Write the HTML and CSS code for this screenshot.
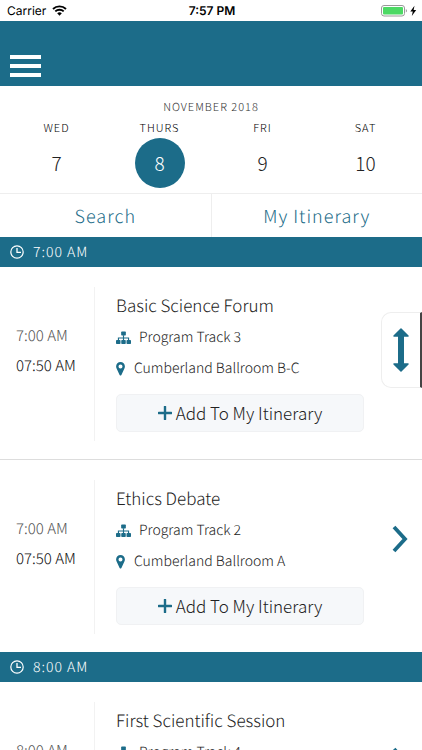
FILE: index.html
```html
<!DOCTYPE html>
<html lang="en">
<head>
  <meta charset="UTF-8">
  <meta name="viewport" content="width=device-width, initial-scale=1">
  <title>Schedule</title>
  <link rel="stylesheet" href="styles.css">
</head>
<body>

  <!-- shared icons -->
  <svg class="sprite" aria-hidden="true">
    <symbol id="clock" viewBox="0 0 14 14">
      <circle cx="7" cy="7" r="6.2" fill="none" stroke="currentColor" stroke-width="1.2"/>
      <path d="M7 3v4.4h4" fill="none" stroke="currentColor" stroke-width="1.3"/>
    </symbol>
    <symbol id="track" viewBox="0 0 16 14">
      <rect x="5.5" y="0" width="5" height="4.2" rx=".8"/>
      <path d="M8 4v6M2.6 10V7h10.8v3" fill="none" stroke="currentColor" stroke-width="1.2"/>
      <rect x="0" y="9.2" width="4.8" height="4.3" rx=".8"/>
      <rect x="5.6" y="9.2" width="4.8" height="4.3" rx=".8"/>
      <rect x="11.2" y="9.2" width="4.8" height="4.3" rx=".8"/>
    </symbol>
    <symbol id="pin" viewBox="0 0 9 14">
      <path fill-rule="evenodd" d="M4.500 0A4.400 4.400 0 0 0 .1 4.500c0 .8.2 1.500.5 2.100L3.600 13q.9 1.200 1.800 0l3-6.400c.3-.6.500-1.300.5-2.100A4.400 4.400 0 0 0 4.500 0zm0 2.500a2 2 0 1 1 0 4 2 2 0 0 1 0-4z"/>
    </symbol>
    <symbol id="plus" viewBox="0 0 14 14">
      <path d="M7 .8v12.400M.8 7h12.400" fill="none" stroke="currentColor" stroke-width="2.400" stroke-linecap="round"/>
    </symbol>
    <symbol id="chevron" viewBox="0 0 16 28">
      <path d="M2 2l11 12L2 26" fill="none" stroke="currentColor" stroke-width="3.800"/>
    </symbol>
  </svg>

  <div class="status">
    <div class="carrier">
      <span>Carrier</span>
      <svg width="15" height="11" viewBox="0 0 15 11">
        <path d="M1 4a9.300 9.300 0 0 1 13 0M3.300 6.400a6 6 0 0 1 8.400 0" fill="none" stroke="#000" stroke-width="1.900"/>
        <path d="M5.200 8.300a3.300 3.300 0 0 1 4.600 0L7.500 10.700z"/>
      </svg>
    </div>
    <strong>7:57 PM</strong>
    <div class="battery">
      <svg width="36" height="12" viewBox="0 0 36 12">
        <rect x=".5" y=".5" width="23" height="10.500" rx="2.500" fill="#fff" stroke="#999"/>
        <rect x="2" y="2" width="20" height="7.500" rx="1" fill="#4cd964"/>
        <path d="M24.800 4v3.500q1.200-.5 1.200-1.750T24.800 4z" fill="#999"/>
        <path d="M33.500.8L29.300 6.600h2.500l-1 4.400 4.400-6h-2.600z"/>
      </svg>
    </div>
  </div>

  <header class="header">
    <button class="menu" aria-label="Menu"><span></span><span></span><span></span></button>
  </header>

  <section class="calendar">
    <h1>NOVEMBER 2018</h1>
    <div class="days">
      <button class="day"><span>WED</span><b>7</b></button>
      <button class="day active"><span>THURS</span><b>8</b></button>
      <button class="day"><span>FRI</span><b>9</b></button>
      <button class="day"><span>SAT</span><b>10</b></button>
    </div>
  </section>

  <nav class="tabs">
    <a href="#search">Search</a>
    <a href="#itinerary">My Itinerary</a>
  </nav>

  <main class="schedule">
    <h2 class="slot"><svg><use href="#clock"/></svg>7:00 AM</h2>

    <article class="session">
      <div class="times"><span>7:00 AM</span><span class="end">07:50 AM</span></div>
      <div class="info">
        <h3>Basic Science Forum</h3>
        <p><svg class="track"><use href="#track"/></svg>Program Track 3</p>
        <p><svg class="pin"><use href="#pin"/></svg>Cumberland Ballroom B-C</p>
        <button class="add"><svg><use href="#plus"/></svg>Add To My Itinerary</button>
      </div>
      <a class="more" href="#basic-science" aria-label="Details"><svg><use href="#chevron"/></svg></a>
    </article>

    <article class="session">
      <div class="times"><span>7:00 AM</span><span class="end">07:50 AM</span></div>
      <div class="info">
        <h3>Ethics Debate</h3>
        <p><svg class="track"><use href="#track"/></svg>Program Track 2</p>
        <p><svg class="pin"><use href="#pin"/></svg>Cumberland Ballroom A</p>
        <button class="add"><svg><use href="#plus"/></svg>Add To My Itinerary</button>
      </div>
      <a class="more" href="#ethics" aria-label="Details"><svg><use href="#chevron"/></svg></a>
    </article>

    <h2 class="slot"><svg><use href="#clock"/></svg>8:00 AM</h2>

    <article class="session">
      <div class="times"><span>8:00 AM</span><span class="end">08:50 AM</span></div>
      <div class="info">
        <h3>First Scientific Session</h3>
        <p><svg class="track"><use href="#track"/></svg>Program Track 4</p>
        <p><svg class="pin"><use href="#pin"/></svg>Cumberland Ballroom A</p>
        <button class="add"><svg><use href="#plus"/></svg>Add To My Itinerary</button>
      </div>
      <a class="more" href="#first-scientific" aria-label="Details"><svg><use href="#chevron"/></svg></a>
    </article>
  </main>

  <!-- floating scroll handle -->
  <button class="handle" aria-label="Scroll">
    <svg width="16" height="44" viewBox="0 0 16 44">
      <path d="M8 1l7 7H1zM8 43l7-7H1z" stroke="currentColor" stroke-width="1.500" stroke-linejoin="round"/>
      <path d="M5 7h6v30H5z"/>
    </svg>
  </button>

</body>
</html>
```
FILE: styles.css
```css
* { box-sizing: border-box; }
body {
  display: flex;
  flex-direction: column;
  height: 100vh;
  margin: 0;
  overflow: hidden;
  background: #fff;
  color: #222;
  font-family: "Noto Sans CJK JP", "Noto Sans", sans-serif;
  font-weight: 300;
  text-rendering: geometricPrecision;
}
h1, h2, h3, p { margin: 0; font-weight: 300; }
button { padding: 0; border: 0; background: none; color: inherit; font: inherit; cursor: pointer; }
a { color: #1c6c89; text-decoration: none; }
svg { fill: currentColor; flex: none; }
.sprite { position: absolute; width: 0; height: 0; }

.status {
  display: grid;
  grid-template-columns: 1fr auto 1fr;
  align-items: center;
  flex: none;
  height: 21px;
  padding: 0 5px 0 7px;
  color: #000;
  font: 12px/20px Inter, sans-serif;
}
.status strong { font-weight: 600; }
.carrier { display: flex; align-items: center; gap: 6px; }
.battery { display: flex; justify-content: flex-end; }

.header {
  display: flex;
  align-items: flex-end;
  flex: none;
  height: 65px;
  padding: 0 10px 9px;
  background: #1c6c89;
}
.menu { display: flex; flex-direction: column; gap: 5px; width: 31px; }
.menu span { height: 4px; background: #fff; }

.calendar { flex: none; padding: 12px 5px 5px; text-align: center; }
.calendar h1 { color: #333; font-size: 11px; line-height: 19px; letter-spacing: 1px; }
.days { display: flex; }
.day { display: flex; flex: 1; flex-direction: column; align-items: center; }
.day span { color: #000; font-size: 11px; line-height: 21px; letter-spacing: 1px; }
.day b { width: 50px; border-radius: 50%; font-size: 19px; line-height: 50px; font-weight: 300; }
.day.active b { background: #1c6c89; color: #fff; }

.tabs { display: flex; flex: none; border-top: 1px solid #eee; }
.tabs a { flex: 1; padding-top: 1px; font-size: 18px; line-height: 42px; letter-spacing: 1px; text-align: center; }
.tabs a + a { border-left: 1px solid #eee; }

.schedule { flex: 1; min-height: 0; overflow: hidden; }
.slot {
  display: flex;
  align-items: center;
  gap: 9px;
  padding: 0 10px;
  background: #1c6c89;
  color: #fff;
  font-size: 14px;
  line-height: 30px;
  letter-spacing: 1px;
}
.slot svg { width: 14px; height: 14px; }

.session { display: flex; padding: 20px 14px 18px 16px; }
.session + .session { border-top: 1px solid #ddd; }
.times {
  display: flex;
  flex-direction: column;
  justify-content: center;
  width: 79px;
  padding-bottom: 26px;
  border-right: 1px solid #f2f2f2;
  color: #555;
  font-size: 15px;
  line-height: 30px;
}
.times .end { color: #111; }
.info { flex: 1; padding: 3px 0 9px 21px; }
.info h3 { padding-bottom: 2px; font-size: 17px; line-height: 30px; }
.info p { display: flex; align-items: center; gap: 8px; font-size: 14px; line-height: 31px; }
.track { width: 15px; height: 14px; color: #1c6c89; }
.pin { width: 9px; height: 14px; margin-right: 1px; color: #1c6c89; }
.add {
  display: flex;
  align-items: center;
  justify-content: center;
  gap: 4px;
  width: 100%;
  margin-top: 10px;
  border: 1px solid #f0f1f3;
  border-radius: 5px;
  background: #f6f8fa;
  font-size: 17px;
  line-height: 36px;
}
.add svg { width: 14px; height: 14px; color: #1c6c89; }
.more { display: flex; align-items: center; margin-left: 28px; padding-bottom: 36px; }
.more svg { width: 16px; height: 28px; }

.handle {
  position: fixed;
  top: 312px;
  right: 0;
  display: flex;
  align-items: center;
  justify-content: center;
  width: 41px;
  height: 76px;
  border: 1px solid #eee;
  border-right: 2px solid #444;
  border-radius: 10px 0 0 10px;
  background: #fff;
  color: #1c6c89;
}
```
